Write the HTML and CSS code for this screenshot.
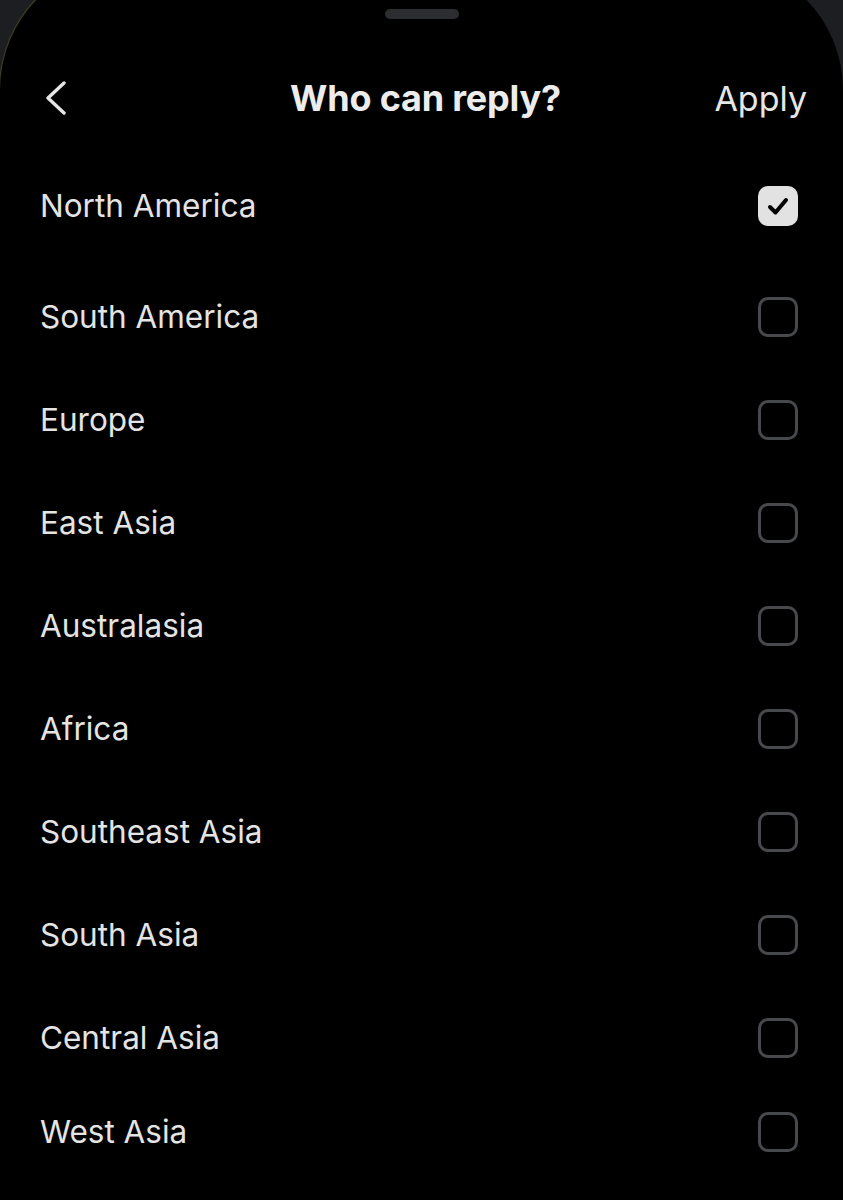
FILE: index.html
```html
<!DOCTYPE html>
<html lang="en">
<head>
<meta charset="UTF-8">
<meta name="viewport" content="width=device-width, initial-scale=1.0">
<title>Who can reply?</title>
<link rel="stylesheet" href="styles.css">
</head>
<body>
    <div class="sheet">
        <div class="handle"></div>

        <div class="header">
            <button class="back" type="button" aria-label="Back">
                <svg width="24" height="34" viewBox="0 0 24 34">
                    <polyline points="20,2 4,17 20,32" fill="none" stroke="#e6e6e6" stroke-width="3.4" stroke-linecap="round" stroke-linejoin="round"/>
                </svg>
            </button>
            <h1 class="title">Who can reply?</h1>
            <button class="apply" type="button">Apply</button>
        </div>

        <ul class="regions">
            <li class="row row--first">
                <span>North America</span>
                <span class="box box--checked">
                    <svg width="40" height="40" viewBox="0 0 40 40">
                        <polyline points="12,21 17.5,26.5 28,14" fill="none" stroke="#000" stroke-width="4" stroke-linecap="round" stroke-linejoin="round"/>
                    </svg>
                </span>
            </li>
            <li class="row"><span>South America</span><span class="box"></span></li>
            <li class="row"><span>Europe</span><span class="box"></span></li>
            <li class="row"><span>East Asia</span><span class="box"></span></li>
            <li class="row"><span>Australasia</span><span class="box"></span></li>
            <li class="row"><span>Africa</span><span class="box"></span></li>
            <li class="row"><span>Southeast Asia</span><span class="box"></span></li>
            <li class="row"><span>South Asia</span><span class="box"></span></li>
            <li class="row"><span>Central Asia</span><span class="box"></span></li>
            <li class="row row--last"><span>West Asia</span><span class="box"></span></li>
        </ul>
    </div>
</body>
</html>
```

FILE: styles.css
```css
body {
    background-color: #1d1e22;
    margin: 0;
    padding: 0;
    font-family: Inter, "Noto Sans", Arial, sans-serif;
    color: #e6e6e6;
    overflow: hidden;
}

.sheet {
    background-color: #000000;
    margin-top: -40px;
    padding-top: 49px;
    min-height: 1250px;
    border-radius: 130px 130px 0 0;
    box-shadow: -1px -1px 0 #3b3a22;
}

.handle {
    width: 74px;
    height: 10px;
    margin: 0 auto 39px;
    border-radius: 5px;
    background-color: #2c2d30;
}

.header {
    display: flex;
    align-items: center;
    justify-content: space-between;
    height: 80px;
    padding: 0 36px 0 44px;
}

.back {
    background: none;
    border: none;
    padding: 0;
    display: flex;
    width: 120px;
}

.title {
    margin: 0;
    font-size: 36px;
    font-weight: 700;
    color: #ececec;
    letter-spacing: -0.2px;
}

.apply {
    background: none;
    border: none;
    padding: 0;
    width: 120px;
    text-align: right;
    font-family: inherit;
    font-size: 34px;
    font-weight: 400;
    color: #e6e6e6;
}

.regions {
    list-style: none;
    margin: 16px 0 0;
    padding: 0;
}

.row {
    display: flex;
    align-items: center;
    justify-content: space-between;
    height: 103px;
    padding: 0 45px 0 40px;
    font-size: 31.5px;
    color: #e4e4e4;
}

.row--first {
    margin-bottom: 8px;
}

.row--last {
    margin-top: -9px;
}

.box {
    box-sizing: border-box;
    width: 40px;
    height: 40px;
    border: 3px solid #48494c;
    border-radius: 10px;
}

.box--checked {
    border: none;
    background-color: #e2e2e2;
    display: flex;
}
```
